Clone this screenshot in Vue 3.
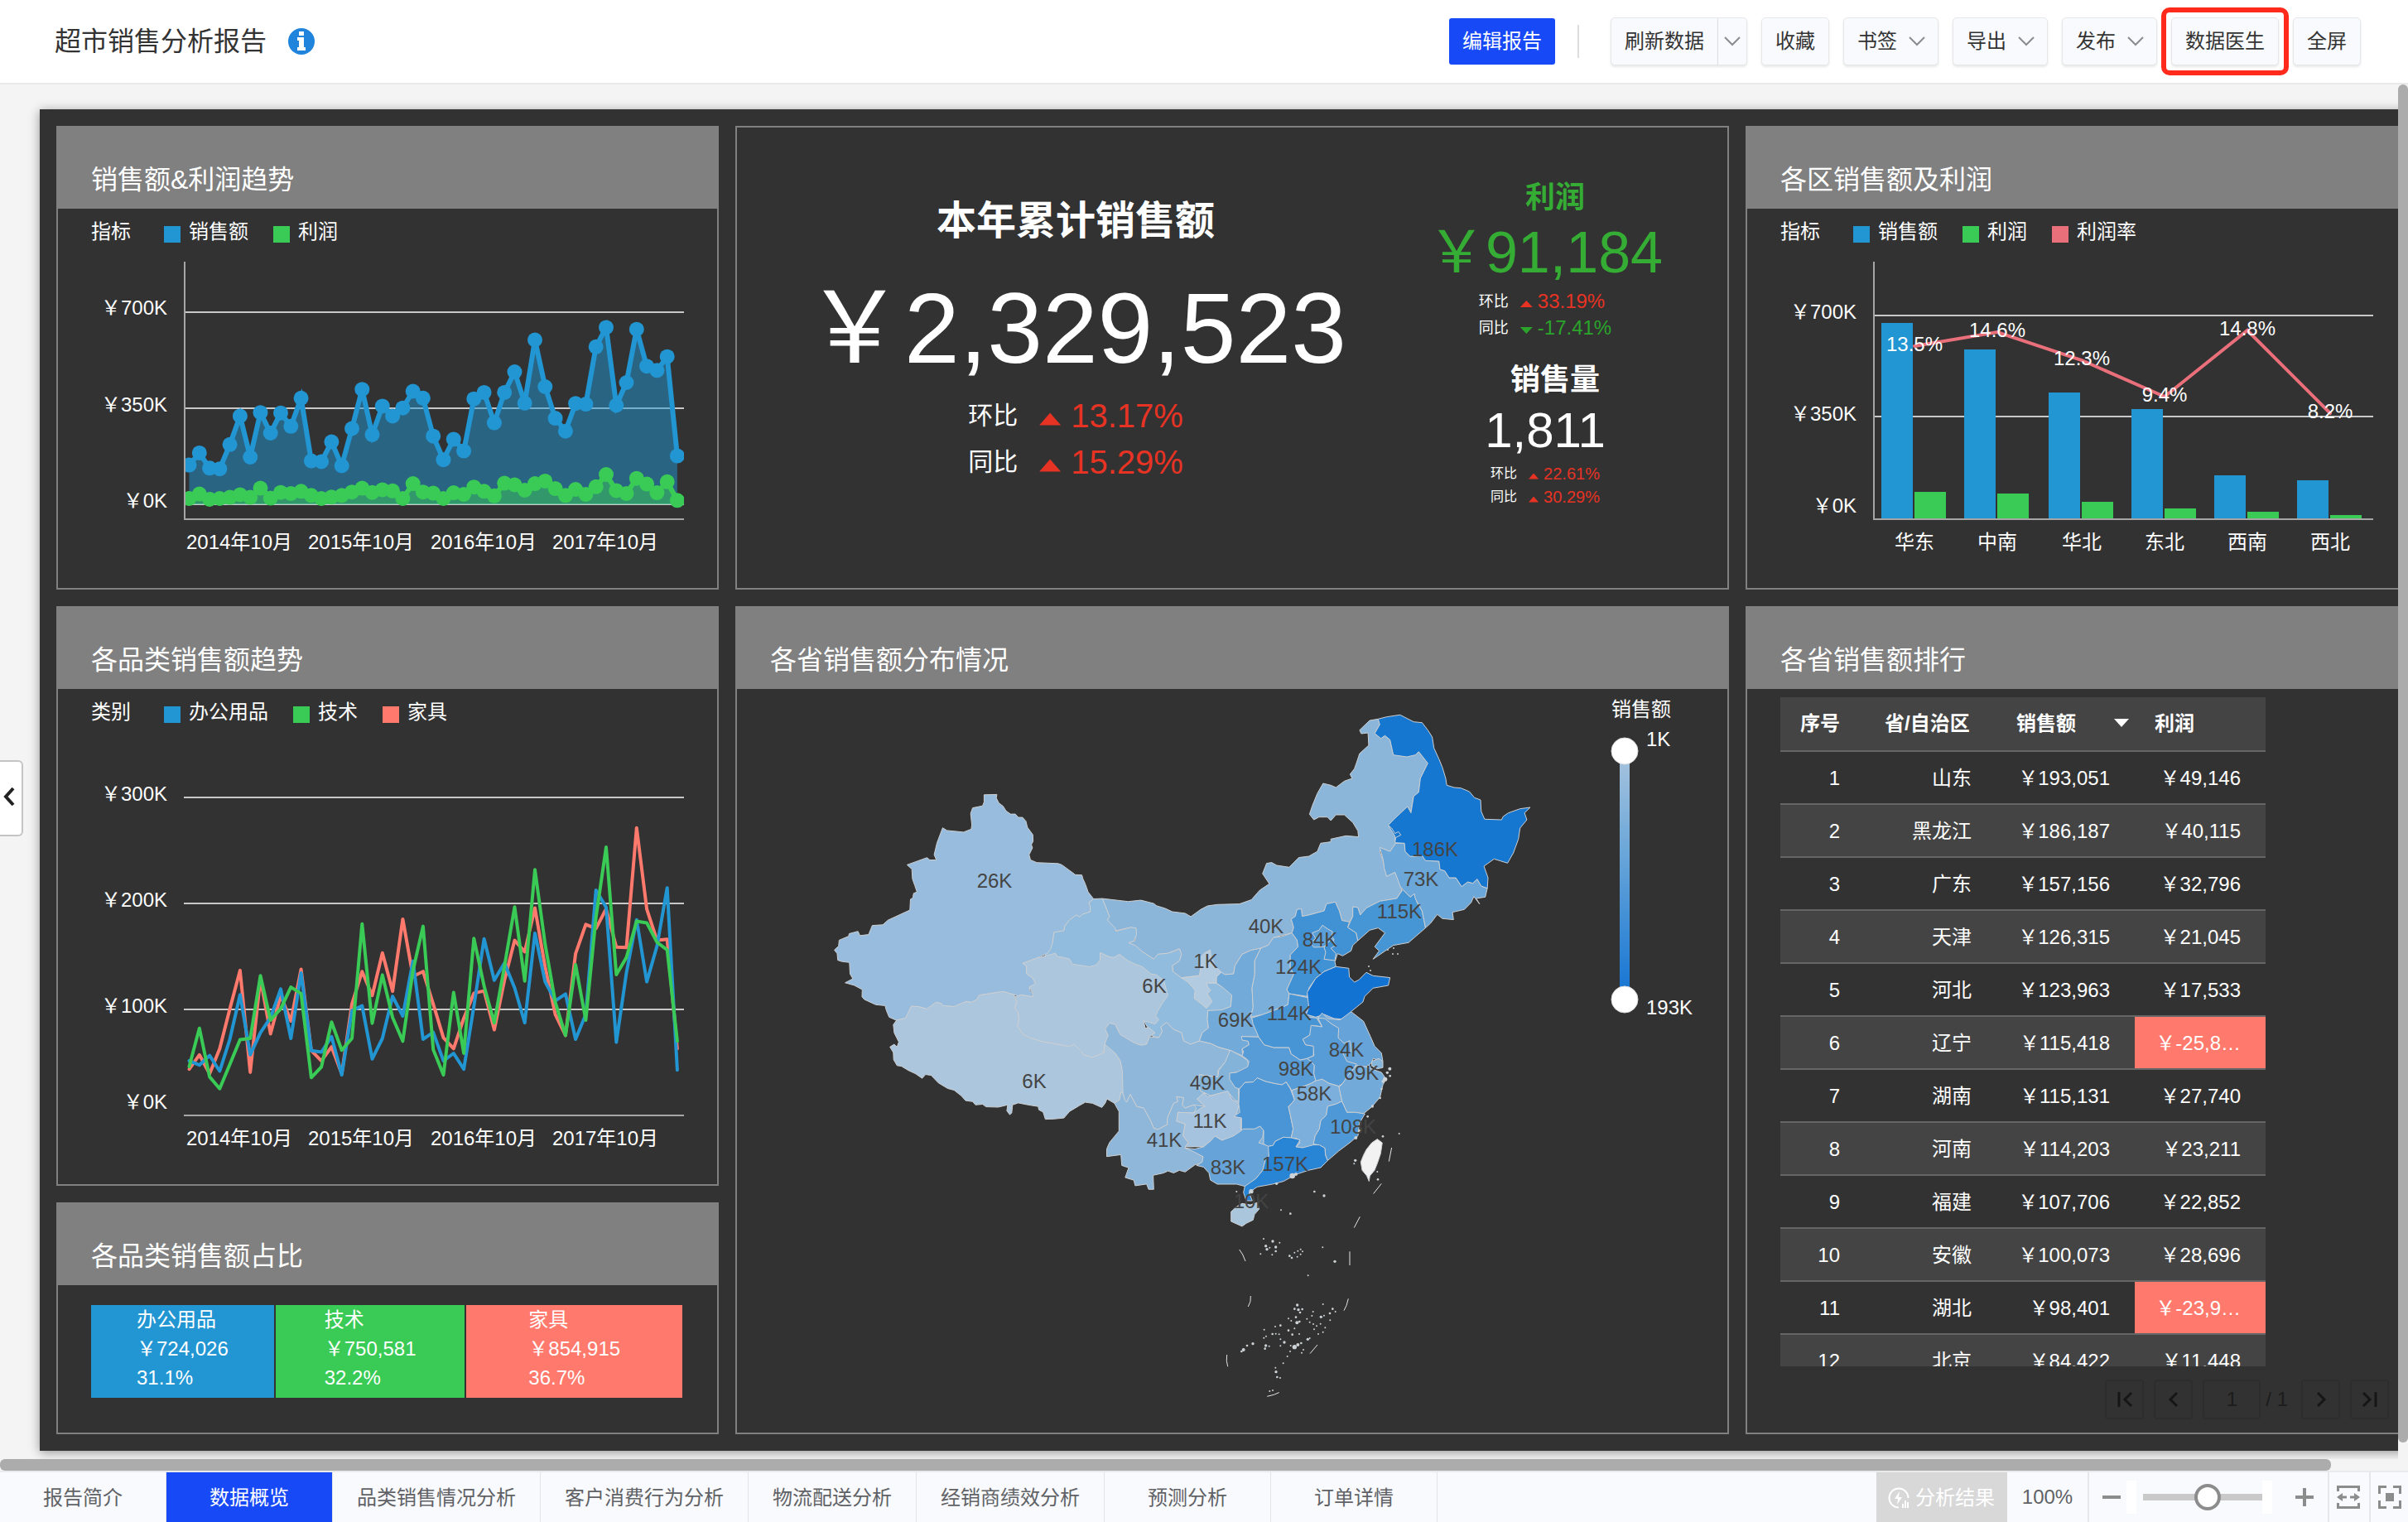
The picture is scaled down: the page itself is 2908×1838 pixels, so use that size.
<script setup>
import { ref } from 'vue'

const actions = [
  { label: '收藏' },
  { label: '书签', menu: true },
  { label: '导出', menu: true },
  { label: '发布', menu: true },
  { label: '数据医生', marked: true },
  { label: '全屏' }
]

const tabs = ['报告简介', '数据概览', '品类销售情况分析', '客户消费行为分析', '物流配送分析', '经销商绩效分析', '预测分析', '订单详情']
const activeTab = ref('数据概览')
const zoomLevel = ref(55)
const page = ref('1')

/* Monthly series, 49 points each */
const salesTrend = [1223, 1191, 1231, 1233, 1169, 1094, 1202, 1085, 1139, 1086, 1121, 1047, 1212, 1214, 1162, 1225, 1127, 1024, 1143, 1068, 1094, 1073, 1029, 1047, 1147, 1209, 1155, 1186, 1049, 1032, 1112, 1032, 978, 1060, 894, 1017, 1100, 1134, 1061, 1063, 912, 861, 1066, 1006, 866, 963, 974, 938, 1199]
const profitTrend = [1311, 1299, 1313, 1311, 1308, 1301, 1308, 1284, 1310, 1295, 1298, 1292, 1303, 1311, 1307, 1303, 1294, 1284, 1295, 1288, 1291, 1311, 1272, 1294, 1297, 1311, 1296, 1300, 1281, 1292, 1304, 1271, 1275, 1289, 1272, 1265, 1285, 1303, 1287, 1300, 1280, 1248, 1290, 1298, 1258, 1273, 1296, 1267, 1316]
const officeTrend = [1222, 1233, 1208, 1249, 1165, 1048, 1206, 1148, 1108, 1033, 1163, 991, 1195, 1199, 1158, 1259, 1090, 1077, 1217, 1163, 1052, 1104, 960, 1165, 1147, 1222, 1202, 1244, 1078, 901, 1010, 965, 1030, 1122, 886, 1014, 1064, 1046, 1165, 1100, 773, 818, 1173, 990, 851, 1014, 920, 767, 1246]
const techTrend = [1237, 1136, 1264, 1295, 1231, 1166, 1163, 998, 1115, 1085, 1028, 1045, 1266, 1238, 1120, 1194, 1163, 862, 1123, 996, 1108, 1170, 985, 868, 1192, 1259, 1042, 1202, 900, 1025, 1122, 973, 817, 1012, 719, 915, 1068, 1155, 969, 1115, 845, 660, 995, 950, 855, 859, 910, 930, 1170]
const furnitureTrend = [1244, 1206, 1256, 1190, 1085, 984, 1252, 1005, 1151, 1050, 1117, 981, 1195, 1222, 1185, 1256, 1073, 987, 1050, 938, 1039, 849, 1000, 987, 1073, 1161, 1190, 1110, 1044, 1038, 1140, 1010, 905, 935, 820, 975, 1100, 1155, 940, 863, 874, 822, 923, 924, 609, 823, 905, 902, 1190]

const toPoints = (series, top) =>
  series.map((v, i) => ({ x: Math.round((228.5 + i * 12.28) * 10) / 10, y: Math.round((top + v * 0.4592) * 10) / 10 }))
const join = (pts) => pts.map((p) => `${p.x},${p.y}`).join(' ')
const area = (pts) => `${pts[0].x},609 ${join(pts)} ${pts[pts.length - 1].x},609`

const trend = [
  { color: '#2296d3', pts: toPoints(salesTrend, 0) },
  { color: '#39cb55', pts: toPoints(profitTrend, 0) }
]
const categoryLines = [
  { color: '#ff796c', pts: toPoints(furnitureTrend, 720) },
  { color: '#2296d3', pts: toPoints(officeTrend, 720) },
  { color: '#39cb55', pts: toPoints(techTrend, 720) }
]
const months = [
  { x: 289, t: '2014年10月' },
  { x: 436, t: '2015年10月' },
  { x: 584, t: '2016年10月' },
  { x: 731, t: '2017年10月' }
]

const regions = [
  { name: '华东', x: 2272, sales: 390, profit: 594, rate: '13.5%', ry: 418 },
  { name: '中南', x: 2372, sales: 422, profit: 596, rate: '14.6%', ry: 401 },
  { name: '华北', x: 2474, sales: 474, profit: 606, rate: '12.3%', ry: 435 },
  { name: '东北', x: 2574, sales: 494, profit: 614, rate: '9.4%', ry: 479 },
  { name: '西南', x: 2674, sales: 574, profit: 618, rate: '14.8%', ry: 399 },
  { name: '西北', x: 2774, sales: 580, profit: 622, rate: '8.2%', ry: 499 }
]

const shares = [
  { name: '办公用品', value: '￥724,026', pct: 31.1, color: '#2296d3' },
  { name: '技术', value: '￥750,581', pct: 32.2, color: '#39cb55' },
  { name: '家具', value: '￥854,915', pct: 36.7, color: '#ff796c' }
]

const ranking = [
  ['山东', '￥193,051', '￥49,146'],
  ['黑龙江', '￥186,187', '￥40,115'],
  ['广东', '￥157,156', '￥32,796'],
  ['天津', '￥126,315', '￥21,045'],
  ['河北', '￥123,963', '￥17,533'],
  ['辽宁', '￥115,418', '￥-25,8…'],
  ['湖南', '￥115,131', '￥27,740'],
  ['河南', '￥114,203', '￥23,211'],
  ['福建', '￥107,706', '￥22,852'],
  ['安徽', '￥100,073', '￥28,696'],
  ['湖北', '￥98,401', '￥-23,9…'],
  ['北京', '￥84,422', '￥11,448']
]

/* Province outlines are kept per map sheet; each sheet has its own origin and unit size */
const sheets = {
  w: [980, 840, 0.3444, 0.3954],
  n: [1450, 840, 0.4082, 0.3333],
  s: [1450, 1200, 0.3333, 0.3333]
}
const outline = (...parts) =>
  parts.map((part) => {
    const [ox, oy, sx, sy] = sheets[part[0]]
    return part.slice(2).split(' ').map((p) => {
      const [x, y] = p.split(',').map(Number)
      return `${(ox + x * sx).toFixed(1)},${(oy + y * sy).toFixed(1)}`
    }).join(' ')
  }).join(' ')

/* Solid ground under the provinces, so that no gap shows along shared borders */
const ground = [
  ['#7fb0db', '1420,1240 1455,1190 1540,1150 1600,1200 1640,1250 1660,1300 1640,1330 1600,1390 1540,1410 1470,1400 1430,1340'],
  ['#1677d1', outline('n:548,470 620,460 640,560 600,575 560,540')]
]

const provinces = [
  ['#8bb6da', outline('n:470,125 475,138 495,135 497,180 470,210 462,240 455,265 442,285 448,300 425,310 400,333 385,325 362,318 345,355 330,400 322,430 335,450 350,440 375,440 385,453 400,432 425,432 450,460 465,490 467,512 430,508 385,520 385,530 355,535 345,565 320,582 290,587 262,622 225,615 210,605 195,608 183,645 203,682 175,705 150,740 115,755 50,757 20,762 0,775', 'w:1330,675 1310,665 1265,660 1240,650 1210,642 1200,635 1155,625 1110,629 1020,620 1045,675 1037,685 1067,718 1120,708 1138,712 1135,748 1112,755 1165,785 1200,805 1215,790 1250,787 1290,773 1297,790 1290,810 1265,825 1267,843 1297,862 1360,855 1400,850 1437,845 1450,852 1480,850 1485,825 1510,790 1540,778', 'n:178,915 200,905 215,877 270,860 275,840 268,810 280,800 285,775 298,773 300,800 320,795 365,780 372,755 398,748 410,780 418,815 440,820 450,800 450,765 465,768 472,795 490,770 530,745 580,735 595,705 585,670 575,640 550,655 540,600 530,565 535,552 560,565 577,535 575,510 555,470 612,402 622,420 630,365 645,350 650,300 672,245 645,203 635,215 570,215 560,160 545,145 533,155 515,137 530,105 525,85 500,90')],
  ['#92bcdd', outline('w:989,621 1020,620 1045,675 1037,685 1065,710 1067,720 1090,715 1120,708 1138,710 1140,730 1130,750 1112,755 1135,763 1165,785 1200,805 1215,790 1250,787 1275,780 1290,773 1297,790 1290,810 1265,825 1267,843 1297,862 1360,870 1400,878 1418,878 1440,890 1465,900 1474,915 1470,950 1438,960 1425,965 1390,962 1388,990 1392,1015 1370,1030 1360,1055 1330,1065 1305,1055 1298,1030 1270,1020 1245,998 1225,1012 1230,1025 1218,1045 1195,1040 1170,1000 1100,900 900,850 815,800 845,755 850,723 885,718 888,703 905,685 928,670 977,660 972,632')],
  ['#97bcdd', outline('w:605,303 650,302 648,313 657,328 672,338 682,352 698,362 715,362 725,372 740,372 752,384 757,402 776,425 777,445 771,455 775,465 763,486 768,502 790,510 865,513 878,517 925,547 948,548 952,560 960,575 970,600 989,621 972,632 978,645 977,660 950,668 940,676 928,670 905,685 888,703 885,718 850,723 845,755 838,775 828,787 790,802 740,818 754,826 754,850 775,862 786,880 764,890 766,900 778,912 775,920 735,914 727,918 712,914 672,904 625,910 588,915 580,928 560,937 543,934 510,946 500,950 460,947 455,940 436,937 405,957 375,950 350,949 330,985 298,992 272,982 262,960 258,947 225,944 185,928 177,920 178,898 150,885 118,877 145,865 135,850 133,815 105,812 92,808 90,788 80,777 95,765 97,747 130,735 132,727 163,720 170,733 200,730 213,702 250,700 268,686 345,655 347,622 355,618 358,604 370,600 362,580 354,560 352,530 335,517 405,495 415,502 438,502 430,486 440,450 460,404 475,412 510,415 533,417 560,408 562,395 558,360 565,343 600,337 605,325')],
  ['#abc6dd', outline('w:298,992 330,985 350,949 375,950 405,957 436,937 455,940 460,947 500,950 510,946 543,934 560,937 580,928 588,915 625,910 672,904 712,914 712,925 720,935 713,955 725,968 728,990 722,1008 740,1033 765,1045 810,1057 865,1065 905,1072 920,1065 945,1085 955,1098 985,1105 1005,1098 1025,1090 1028,1065 1055,1075 1065,1092 1083,1115 1090,1145 1095,1215 1085,1212 1080,1235 1062,1245 1036,1232 1030,1245 1018,1258 985,1245 960,1242 940,1252 905,1270 885,1290 850,1293 820,1294 812,1272 797,1265 795,1255 760,1250 725,1244 705,1250 702,1275 695,1280 685,1268 688,1250 655,1257 612,1256 600,1248 575,1250 565,1240 540,1237 525,1222 500,1205 478,1200 445,1183 420,1160 400,1157 388,1169 365,1155 340,1145 315,1132 300,1130 288,1112 287,1090 275,1073 290,1065 300,1073 306,1058 290,1030 287,1005')],
  ['#abc6dd', outline('w:740,818 790,802 855,787 862,797 885,800 905,805 915,820 935,823 975,828 997,823 1012,808 1012,785 1045,798 1060,800 1080,790 1110,810 1135,820 1160,828 1190,850 1210,853 1235,870 1243,895 1250,915 1230,940 1215,962 1207,978 1218,990 1205,1003 1165,993 1170,1015 1185,1015 1205,1030 1185,1042 1175,1065 1155,1068 1130,1060 1100,1052 1082,1035 1065,1005 1045,1000 1030,1018 1040,1038 1028,1065 1025,1090 1005,1098 985,1105 955,1098 945,1085 920,1065 905,1072 865,1065 810,1057 765,1045 740,1033 722,1008 728,990 725,968 713,955 720,935 712,920 735,914 775,920 778,912 764,890 786,880 775,862 754,850 754,826')],
  ['#72abd9', outline('n:178,915 160,960 160,1010 152,1060 155,1130 148,1165', 's:185,90 210,157 148,155 172,172 175,185 150,200 152,225 105,205 70,195 0,180', 'w:1430,1075 1400,1063 1360,1055 1370,1030 1392,1015 1388,990 1390,962 1438,960 1470,950 1474,915 1440,890 1420,878 1420,860 1437,845 1450,852 1480,850 1485,825 1510,790 1540,778')],
  ['#b3cbe0', outline('w:1297,862 1360,855 1365,830 1362,800 1380,785 1398,777 1402,800 1420,830 1437,845 1420,860 1418,878 1385,878 1390,890 1400,900 1388,910 1405,935 1385,955 1365,940 1342,925 1345,900 1320,875')],
  ['#8eb7da', outline('w:1028,1065 1040,1038 1030,1018 1045,1000 1065,1005 1082,1035 1130,1060 1155,1068 1175,1065 1185,1042 1218,1045 1230,1025 1225,1012 1245,998 1270,1020 1298,1030 1305,1055 1330,1065 1360,1055 1400,1063 1430,1075 1465,1083 1468,1095 1450,1120 1425,1145 1425,1165 1380,1160 1360,1158 1358,1190 1368,1210 1400,1215 1375,1215 1352,1232 1380,1255 1340,1250 1310,1260 1300,1250 1305,1228 1280,1225 1285,1240 1270,1245 1248,1290 1248,1310 1215,1325 1200,1322 1190,1300 1165,1260 1140,1255 1118,1218 1105,1242 1098,1235 1092,1215 1090,1145 1083,1115 1065,1092')],
  ['#84b3da', outline('w:1468,1083 1505,1100 1530,1115 1532,1135 1500,1150 1468,1153 1470,1175 1497,1200 1498,1240 1485,1235 1460,1210 1430,1215 1400,1222 1365,1208 1357,1190 1360,1158 1425,1165 1428,1145 1450,1120')],
  ['#8eb7da', outline('w:1098,1235 1105,1242 1118,1218 1140,1255 1165,1260 1190,1300 1200,1322 1215,1325 1248,1310 1248,1290 1270,1245 1285,1240 1280,1225 1305,1228 1300,1250 1310,1260 1340,1250 1350,1260 1340,1275 1285,1273 1280,1300 1310,1308 1303,1345 1320,1365 1310,1382 1345,1390 1373,1410 1370,1428 1345,1433 1310,1455 1290,1450 1270,1458 1250,1452 1235,1458 1198,1465 1200,1508 1182,1508 1175,1492 1135,1497 1130,1480 1100,1472 1112,1442 1088,1435 1085,1402 1035,1408 1035,1385 1045,1365 1078,1330 1078,1270 1062,1245 1080,1235 1085,1212 1092,1215')],
  ['#65a3d9', outline('w:1310,1382 1345,1385 1375,1378', 's:10,540 50,515 75,530 100,513 145,495 155,490 195,488 215,480 228,495 225,520 210,540 250,553 247,590 235,600 225,640 200,670 185,682 160,698 130,690 60,690 35,675 30,650', 'w:1375,1440 1350,1435 1370,1425 1373,1408 1340,1393')],
  ['#a5c3df', outline('w:1285,1273 1340,1275 1365,1260 1380,1255 1352,1232 1375,1215 1390,1225 1430,1215 1460,1208 1475,1235 1500,1245 1490,1280 1505,1285 1505,1330 1480,1345 1440,1358 1415,1345 1400,1360 1375,1378 1310,1378 1322,1365 1303,1345 1310,1308 1280,1300')],
  ['#579cd7', outline('s:210,157 230,185 265,195 320,195 328,218 360,240 385,235 400,245 412,260 410,290 418,315 400,325 375,335 330,350 310,320 295,330 275,327 235,318 205,305 190,320 160,322 140,345 125,340 105,310 105,288 130,285 170,265 175,245 165,235 150,225 155,210 150,200 175,185 172,172 150,168 148,155')],
  ['#4a95d6', outline('s:140,345 160,322 190,320 205,305 235,318 275,327 295,330 310,320 325,345 340,385 318,410 325,440 335,490 328,522 300,520 270,535 262,550 245,553 228,545 228,495 215,480 195,490 155,490 148,495 148,450 120,445 142,430 138,400')],
  ['#7aaedb', outline('n:178,915 200,905 215,877 240,873 270,860 275,870 285,885 288,910 265,940 265,985 275,1010 255,1065 262,1080 258,1120 240,1130 185,1155 148,1165 155,1130 152,1060 160,1010 160,960')],
  ['#4191d5', outline('n:270,860 275,840 268,810 280,800 285,775 298,773 300,800 320,795 365,780 372,755 398,748 410,780 418,815 440,820 435,840 460,860 465,888 450,905 445,925 420,943 405,935 397,965 400,982 365,1000 340,1025 320,1060 315,1090 262,1080 255,1065 275,1010 265,985 265,940 288,910 285,885')],
  ['#5b9fd8', outline('n:330,860 350,850 360,832 375,845 390,855 388,870 395,885 365,910 335,912 325,895 340,880')],
  ['#3e90d5', outline('n:365,912 388,880 400,905 385,915 400,935 397,960 365,955 370,930')],
  ['#4695d5', outline('n:598,703 620,730 632,718 640,750 655,780 665,842 615,895 570,905 510,955 528,925 515,910 545,860 525,842 500,850 465,888 460,860 435,840 450,800 450,765 465,768 472,795 490,770 530,745 580,735')],
  ['#6ba7d9', outline('n:530,550 560,565 577,535 603,535 605,565 620,583 655,580 665,598 705,600 708,630 722,635 735,660 755,660 772,692 790,675 805,680 818,665 830,690 848,698 842,730 815,735 825,755 808,728 800,750 780,775 745,785 748,812 715,808 700,793 680,825 665,842 655,780 635,735 632,718 620,730 598,703 590,690 575,640 550,655 543,625 540,595')],
  ['#1677d1', outline('n:525,85 550,77 590,70 630,95 655,98 672,125 685,150 690,190 705,230 715,260 725,300 728,325 750,333 770,335 795,348 810,370 828,378 830,420 840,448 890,450 895,438 910,425 945,410 975,405 958,425 965,450 945,480 940,520 925,570 908,607 868,592 838,618 850,660 848,698 830,690 818,665 805,680 790,675 772,692 755,660 735,660 722,635 708,630 705,600 665,598 655,580 620,583 605,565 603,535 575,533 577,515 592,505 585,493 575,500 565,480 555,470 570,450 612,402 622,425 630,365 645,350 650,300 672,245 645,203 635,215 610,222 570,215 560,160 545,145 533,155 515,137 530,105')],
  ['#4895d5', outline('n:262,1080 320,1095 325,1110 312,1150', 's:390,85 420,88 440,120 405,115 395,150 370,165 380,185 410,190 408,225 385,235 360,240 328,218 320,195 265,195 230,185 210,157 190,110 185,88', 'n:185,1155 240,1130 258,1120')],
  ['#1273d3', outline('n:400,982 438,988 440,1020 455,1038 468,1030 490,1003 510,1015 560,1022 555,1050 510,1060 485,1090 480,1110 445,1145 440,1160 415,1172 395,1170 365,1155 340,1165 312,1155 320,1130 315,1075 340,1025 365,1000')],
  ['#65a3d9', outline('s:425,88 440,70 460,90 505,95 545,65 590,100 615,155 630,190 655,215 660,245 625,235 620,250 600,265 565,265 530,260 505,220 510,180 498,160 490,125 475,110')],
  ['#579cd7', outline('s:425,88 450,90 475,110 500,125 498,160 520,180 540,170 545,210 515,215 530,245 565,255 540,290 515,325 500,335 465,325 440,310 418,318 410,290 412,260 400,245 385,235 410,225 408,190 380,185 370,165 395,150 400,115 440,120')],
  ['#72abd9', outline('s:530,300 565,260 600,265 640,280 655,285 672,310 660,330 650,375 620,410 590,435 560,430 530,430 512,390 500,340 515,325')],
  ['#86b5db', outline('s:620,245 645,235 660,245 660,268 640,272 620,262')],
  ['#7cafdb', outline('s:330,350 375,335 400,325 418,315 440,310 465,325 500,335 512,390 490,400 460,408 455,440 435,460 430,490 415,515 408,555 370,558 345,555 360,540 350,525 328,522 335,490 325,440 318,410 340,385')],
  ['#4f98d7', outline('s:460,408 490,400 512,390 530,430 560,430 595,435 575,470 570,515 540,540 500,570 460,605 452,585 450,560 430,548 408,545 415,515 430,490 435,460 455,440')],
  ['#2884d4', outline('s:245,553 262,550 270,535 300,520 328,522 360,530 345,555 370,558 408,548 430,548 450,560 452,585 460,605 435,630 390,640 345,655 300,680 260,690 205,700 175,720 187,750 165,750 155,720 160,698 200,670 225,640 235,600 247,590')],
  ['#a9c6dd', outline('s:110,790 130,772 150,760 180,765 205,757 212,780 195,800 190,820 165,832 150,843 110,825')],
  ['#f2f2f2', outline('s:640,527 658,540 652,580 640,615 630,640 613,660 610,680 602,660 585,640 580,610 590,585 600,565 620,540')]
]

const seaLines = ['692,558 682,608', '655,688 626,725', '577,808 556,848', '540,934 540,984', '535,1105 528,1130 519,1148', '423,1272 396,1304', '284,1445 265,1453 241,1459', '95,1308 94,1330 98,1351', '181,1095 180,1115 172,1134', '140,927 152,945 162,969'].map((l) => outline('s:' + l))

const islets = '412,717,4 447,732,5 291,784,3 325,797,4 228,888,3 261,897,5 236,914,5 240,926,5 250,920,2 272,918,5 286,902,2 272,933,4 259,946,3 217,943,2 322,950,4 330,957,4 340,938,3 352,932,3 362,926,3 369,934,3 350,953,3 362,944,2 442,919,3 486,970,5 389,1021,3 719,507,3 660,517,4 560,604,5 556,616,3 640,645,3 642,673,4 443,1125,3 350,1128,5 340,1142,4 354,1145,5 368,1143,4 360,1155,4 345,1172,4 318,1177,3 328,1185,3 349,1192,6 358,1188,4 385,1178,3 403,1167,3 407,1152,2 395,1190,3 408,1197,3 420,1204,3 436,1171,5 447,1166,3 434,1196,3 411,1216,3 426,1233,3 443,1226,3 451,1210,2 468,1158,4 478,1142,4 488,1152,3 469,1183,2 270,1206,3 289,1202,4 230,1217,2 260,1233,4 272,1232,3 284,1234,3 229,1247,3 237,1241,3 318,1220,4 332,1235,4 357,1233,3 340,1213,2 388,1252,5 395,1248,2 289,1252,2 303,1263,5 289,1276,2 236,1275,5 233,1286,4 248,1277,3 189,1268,5 168,1275,4 155,1290,6 148,1296,4 326,1275,3 340,1280,8 352,1272,6 364,1266,4 366,1301,3 372,1290,3 324,1296,3 314,1314,2 299,1339,2 271,1355,3 273,1370,5 277,1389,4 288,1392,2 250,1440,3 261,1437,3 130,717,3 183,716,8 332,660,10 345,654,6 275,688,5 685,272,6 676,286,5 686,298,4 668,310,8 660,318,5 655,345,4 650,378,4 622,408,5 605,445,4 575,498,6 562,522,6'
  .split(' ').map((t) => t.split(',').map(Number)).map(([x, y, r]) => ({ x: 1450 + x / 3, y: 1200 + y / 3, r: Math.max(1, r / 3) }))
const coastIslets = [[1676, 1147, 1], [1682, 1152, 1], [1688, 1152, 1], [1653, 1167, 1], [1655, 1172, 1], [1683, 1145, 1]]

const mapLabels = [
  [1201, 1064, '26K'], [1394, 1191, '6K'], [1249, 1306, '6K'], [1456, 1161, '1K'], [1492, 1232, '69K'],
  [1458, 1308, '49K'], [1461, 1354, '11K'], [1406, 1377, '41K'], [1483, 1410, '83K'], [1733, 1026, '186K'],
  [1716, 1062, '73K'], [1690, 1101, '115K'], [1529, 1119, '40K'], [1594, 1135, '84K'], [1568, 1168, '124K'],
  [1557, 1224, '114K'], [1626, 1268, '84K'], [1565, 1291, '98K'], [1644, 1296, '69K'], [1587, 1321, '58K'],
  [1634, 1361, '108K'], [1552, 1406, '157K'], [1511, 1451, '10K']
]
</script>

<template>
  <div class="page">
    <header class="topbar">
      <h1>超市销售分析报告</h1>
      <svg class="info" viewBox="0 0 32 32" aria-hidden="true">
        <circle cx="16" cy="16" r="16" fill="#2084dc" />
        <path d="M13 4h6v5h-6zM11 11h8v12h2v4H11v-4h2v-8h-2z" fill="#fff" />
      </svg>
      <div class="spacer"></div>
      <button class="primary" type="button">编辑报告</button>
      <span class="rule"></span>
      <div class="split">
        <button class="btn split-main" type="button">刷新数据</button>
        <button class="btn split-more" type="button" aria-label="更多刷新选项">
          <svg class="chev" viewBox="0 0 20 12"><path d="M1 1l9 9 9-9" /></svg>
        </button>
      </div>
      <button v-for="a in actions" :key="a.label" class="btn" :class="{ menu: a.menu, marked: a.marked }" type="button">
        {{ a.label }}
        <svg v-if="a.menu" class="chev" viewBox="0 0 20 12"><path d="M1 1l9 9 9-9" /></svg>
      </button>
    </header>

    <div class="stage">
      <button class="drawer" type="button" aria-label="展开">
        <svg viewBox="0 0 14 24"><path d="M12 2L3 12l9 10" /></svg>
      </button>
      <div class="viewport">
        <main class="board">
          <section class="panel">
            <h2>销售额&amp;利润趋势</h2>
            <div class="legend">
              <span class="legend-name">指标</span>
              <span class="key blue">销售额</span>
              <span class="key green">利润</span>
            </div>
            <svg class="chart" viewBox="70 308 796 402">
              <defs><clipPath id="plot"><rect x="224" y="316" width="602" height="320" /></clipPath></defs>
              <path class="grid" d="M224 377H826M224 493H826M224 609H826" />
              <g clip-path="url(#plot)">
                <polygon v-for="s in trend" :key="s.color" :points="area(s.pts)" :fill="s.color" fill-opacity="0.5" />
                <g v-for="s in trend" :key="'l' + s.color">
                  <polyline :points="join(s.pts)" fill="none" :stroke="s.color" stroke-width="6" />
                  <circle v-for="p in s.pts" :key="p.x" :cx="p.x" :cy="p.y" r="9" :fill="s.color" />
                </g>
              </g>
              <path class="axis" d="M223 316V627H826" />
              <g text-anchor="end">
                <text x="202" y="380">￥700K</text>
                <text x="202" y="497">￥350K</text>
                <text x="202" y="613">￥0K</text>
              </g>
              <text v-for="m in months" :key="m.t" :x="m.x" y="663" text-anchor="middle">{{ m.t }}</text>
            </svg>
          </section>

          <section class="panel kpis">
            <div class="kpi main">
              <h3>本年累计销售额</h3>
              <p class="value">￥2,329,523</p>
              <dl>
                <dt>环比</dt><dd class="up">13.17%</dd>
                <dt>同比</dt><dd class="up">15.29%</dd>
              </dl>
            </div>
            <div class="kpi-side">
              <div class="kpi profit">
                <h3>利润</h3>
                <p class="value">￥91,184</p>
                <dl>
                  <dt>环比</dt><dd class="up">33.19%</dd>
                  <dt>同比</dt><dd class="down">-17.41%</dd>
                </dl>
              </div>
              <div class="kpi volume">
                <h3>销售量</h3>
                <p class="value">1,811</p>
                <dl>
                  <dt>环比</dt><dd class="up">22.61%</dd>
                  <dt>同比</dt><dd class="up">30.29%</dd>
                </dl>
              </div>
            </div>
          </section>

          <section class="panel">
            <h2>各区销售额及利润</h2>
            <div class="legend">
              <span class="legend-name">指标</span>
              <span class="key blue">销售额</span>
              <span class="key green">利润</span>
              <span class="key rose">利润率</span>
            </div>
            <svg class="chart" viewBox="2110 308 796 402">
              <path class="grid" d="M2264 381H2866M2264 503H2866" />
              <g v-for="r in regions" :key="r.name">
                <rect :x="r.x" :y="r.sales" width="38" :height="626 - r.sales" fill="#2296d3" />
                <rect :x="r.x + 40" :y="r.profit" width="38" :height="626 - r.profit" fill="#39cb55" />
              </g>
              <path class="axis" d="M2263 316V627H2866" />
              <polyline :points="regions.map((r) => `${r.x + 40},${r.ry}`).join(' ')" fill="none" stroke="#e96f7a" stroke-width="4" stroke-linecap="round" />
              <g text-anchor="end">
                <text x="2242" y="385">￥700K</text>
                <text x="2242" y="508">￥350K</text>
                <text x="2242" y="619">￥0K</text>
              </g>
              <g text-anchor="middle">
                <text v-for="r in regions" :key="r.rate" :x="r.x + 40" :y="r.ry + 6">{{ r.rate }}</text>
                <text v-for="r in regions" :key="r.name" :x="r.x + 40" y="663">{{ r.name }}</text>
              </g>
            </svg>
          </section>

          <section class="panel">
            <h2>各品类销售额趋势</h2>
            <div class="legend">
              <span class="legend-name">类别</span>
              <span class="key blue">办公用品</span>
              <span class="key green">技术</span>
              <span class="key coral">家具</span>
            </div>
            <svg class="chart" viewBox="70 888 796 542">
              <path class="grid" d="M222 963H826M222 1091H826M222 1219H826" />
              <path class="axis" d="M222 1347H826" />
              <polyline v-for="s in categoryLines" :key="s.color" :points="join(s.pts)" fill="none" :stroke="s.color" stroke-width="4" stroke-linejoin="round" stroke-linecap="round" />
              <g text-anchor="end">
                <text x="202" y="967">￥300K</text>
                <text x="202" y="1095">￥200K</text>
                <text x="202" y="1223">￥100K</text>
                <text x="202" y="1339">￥0K</text>
              </g>
              <text v-for="m in months" :key="m.t" :x="m.x" y="1383" text-anchor="middle">{{ m.t }}</text>
            </svg>
          </section>

          <section class="panel tall">
            <h2>各省销售额分布情况</h2>
            <svg class="chart" viewBox="890 832 1196 898">
              <defs>
                <linearGradient id="scale" x1="0" y1="0" x2="0" y2="1">
                  <stop offset="0" stop-color="#a9c5de" />
                  <stop offset="0.4" stop-color="#6ba7d9" />
                  <stop offset="1" stop-color="#1273d3" />
                </linearGradient>
              </defs>
              <polygon v-for="g in ground" :key="g[0]" :points="g[1]" :fill="g[0]" />
              <g stroke="#cdd0d3" stroke-width="1" stroke-linejoin="round">
                <polygon v-for="(p, i) in provinces" :key="i" :points="p[1]" :fill="p[0]" />
              </g>
              <polyline v-for="l in seaLines" :key="l" :points="l" fill="none" stroke="#e4e4e4" stroke-width="1" />
              <g fill="#cdd2d6">
                <circle v-for="(c, i) in islets" :key="i" :cx="c.x" :cy="c.y" :r="c.r" />
                <circle v-for="(c, i) in coastIslets" :key="'c' + i" :cx="c[0]" :cy="c[1]" :r="c[2]" />
              </g>
              <g class="map-labels" text-anchor="middle">
                <text v-for="(l, i) in mapLabels" :key="i" :x="l[0]" :y="l[1] + 8">{{ l[2] }}</text>
              </g>
              <text x="1946" y="865">销售额</text>
              <rect x="1956" y="907" width="12" height="300" fill="url(#scale)" />
              <circle cx="1962" cy="907" r="16" fill="#fff" stroke="#ddd" />
              <circle cx="1962" cy="1207" r="16" fill="#fff" stroke="#ddd" />
              <text x="1988" y="901">1K</text>
              <text x="1988" y="1225">193K</text>
            </svg>
          </section>

          <section class="panel tall">
            <h2>各省销售额排行</h2>
            <div class="table-view">
              <table>
                <colgroup><col class="c-no" /><col class="c-area" /><col class="c-sales" /><col class="c-profit" /></colgroup>
                <thead>
                  <tr>
                    <th>序号</th>
                    <th>省/自治区</th>
                    <th class="sorted">销售额</th>
                    <th>利润</th>
                  </tr>
                </thead>
                <tbody>
                  <tr v-for="(r, i) in ranking" :key="r[0]">
                    <td>{{ i + 1 }}</td>
                    <td>{{ r[0] }}</td>
                    <td>{{ r[1] }}</td>
                    <td :class="{ loss: r[2].includes('-') }">{{ r[2] }}</td>
                  </tr>
                </tbody>
              </table>
            </div>
            <div class="pager">
              <button type="button" aria-label="首页"><svg viewBox="0 0 20 20"><path d="M3 1v18M18 2l-8 8 8 8" /></svg></button>
              <button type="button" aria-label="上一页"><svg viewBox="0 0 20 20"><path d="M14 2l-8 8 8 8" /></svg></button>
              <input v-model="page" type="text" aria-label="页码" />
              <span>/ 1</span>
              <button type="button" aria-label="下一页"><svg viewBox="0 0 20 20"><path d="M6 2l8 8-8 8" /></svg></button>
              <button type="button" aria-label="末页"><svg viewBox="0 0 20 20"><path d="M17 1v18M2 2l8 8-8 8" /></svg></button>
            </div>
          </section>

          <section class="panel">
            <h2>各品类销售额占比</h2>
            <div class="shares">
              <div v-for="s in shares" :key="s.name" class="share" :style="{ flexGrow: s.pct, background: s.color }">
                <p>{{ s.name }}<br />{{ s.value }}<br />{{ s.pct }}%</p>
              </div>
            </div>
          </section>
        </main>
      </div>
      <div class="vscroll"><i></i></div>
    </div>
    <div class="hscroll"><i></i></div>

    <footer class="bottombar">
      <nav>
        <button v-for="t in tabs" :key="t" type="button" class="tab" :class="{ active: t === activeTab }" @click="activeTab = t">{{ t }}</button>
      </nav>
      <button class="result" type="button">
        <svg viewBox="0 0 26 26">
          <path d="M13 24.500A11.500 11.500 0 1 1 24.500 13" fill="none" stroke="#fff" stroke-width="2" />
          <path d="M14 5l-6 9h4l-1 7 6-9h-4z" fill="#fff" />
          <path d="M18 25v-5M21 25v-9M24 25v-7" stroke="#fff" stroke-width="2" />
        </svg>
        分析结果
      </button>
      <span class="percent">100%</span>
      <div class="zoomer">
        <button type="button" aria-label="缩小"><svg viewBox="0 0 22 22"><path d="M0 11h22" /></svg></button>
        <i></i>
        <input v-model="zoomLevel" type="range" min="0" max="100" aria-label="缩放" />
        <i class="end"></i>
        <button type="button" aria-label="放大"><svg viewBox="0 0 22 22"><path d="M0 11h22M11 0v22" /></svg></button>
      </div>
      <button class="fit" type="button" aria-label="适应宽度">
        <svg viewBox="0 0 28 28"><path d="M1.500 7V1.500h25V7M1.500 21v5.500h25V21M5 14h7M16 14h7" /><path class="solid" d="M0 14l7-5v10zM28 14l-7-5v10z" /></svg>
      </button>
      <button class="fit" type="button" aria-label="适应页面">
        <svg viewBox="0 0 28 28"><path d="M1.500 10V1.500H10M18 1.500h8.500V10M26.500 18v8.500H18M10 26.500H1.500V18" /><path class="solid" d="M9 9h10v10H9z" /></svg>
      </button>
    </footer>
  </div>
</template>

<style>
body {
  margin: 0;
  background: #f4f4f4;
}
</style>

<style scoped>
* {
  box-sizing: border-box;
}
.page {
  font: 24px/32px "Liberation Sans", "Noto Sans CJK SC", sans-serif;
  color: #333;
  overflow: hidden;
}
button,
input {
  font: inherit;
  color: inherit;
  margin: 0;
  padding: 0;
  border: 0;
  background: none;
}
h1,
h2,
h3,
p,
dl,
dd {
  margin: 0;
  font-weight: 400;
}

.topbar {
  display: flex;
  align-items: center;
  gap: 17px;
  height: 102px;
  padding: 0 57px 0 66px;
  background: #fff;
  border-bottom: 2px solid #e8e8e8;
}
h1 {
  font-size: 32px;
  line-height: 48px;
}
.info {
  width: 32px;
  height: 32px;
  margin-left: 9px;
}
.spacer {
  flex: 1;
}
.primary {
  height: 56px;
  padding: 0 16px;
  border-radius: 3px;
  background: #1849f6;
  color: #fff;
}
.rule {
  width: 2px;
  height: 40px;
  margin: 0 21px 0 10px;
  background: #ddd;
}
.btn {
  position: relative;
  display: flex;
  align-items: center;
  height: 58px;
  padding: 0 16px;
  border: 1px solid #e6e7e9;
  border-radius: 5px;
  background: #f8fafd;
  box-shadow: 0 2px 3px #00000018;
}
.btn.menu {
  gap: 14px;
  padding-right: 15px;
}
.chev {
  width: 20px;
  height: 12px;
  fill: none;
  stroke: #8a8c90;
  stroke-width: 2;
}
.split {
  display: flex;
}
.split-main {
  border-radius: 5px 0 0 5px;
}
.split-more {
  padding: 0 7px;
  border-left: 0;
  border-radius: 0 5px 5px 0;
}
.marked::after {
  content: "";
  position: absolute;
  inset: -13px;
  border: 6px solid #ff2a1c;
  border-radius: 10px;
}

.stage {
  position: relative;
  display: flex;
}
.viewport {
  flex: 1;
  min-width: 0;
  overflow: hidden;
}
.drawer {
  position: absolute;
  left: 0;
  top: 816px;
  width: 28px;
  height: 92px;
  display: flex;
  align-items: center;
  padding: 0 0 4px 4px;
  background: #fff;
  border: 2px solid #c4c4c4;
  border-left: 0;
  border-radius: 0 6px 6px 0;
}
.drawer svg {
  width: 14px;
  height: 24px;
  fill: none;
  stroke: #222;
  stroke-width: 4;
}
.board {
  display: grid;
  grid-template-columns: 2fr 3fr 2fr;
  gap: 20px;
  margin: 30px -32px 10px 48px;
  padding: 20px;
  background: #323232;
  box-shadow: 0 2px 12px #00000066;
}
.panel {
  min-width: 0;
  border: 2px solid #808080;
  color: #fff;
}
.panel.tall {
  grid-row: span 2;
}
h2 {
  height: 98px;
  padding: 39px 40px 0;
  background: #808080;
  font-size: 32px;
  line-height: 48px;
}
.legend {
  display: flex;
  align-items: center;
  height: 56px;
  padding-left: 40px;
  gap: 29px;
}
.legend-name {
  margin-right: 11px;
}
.key {
  display: flex;
  align-items: center;
  gap: 10px;
}
.key + .key {
  margin-left: 1px;
}
.key::before {
  content: "";
  width: 20px;
  height: 20px;
  margin-top: 6px;
  background: currentColor;
}
.key.blue::before {
  background: #2296d3;
}
.key.green::before {
  background: #39cb55;
}
.key.rose::before {
  background: #e96f7a;
}
.key.coral::before {
  background: #ff796c;
}
.chart {
  display: block;
  width: 100%;
}
.chart text {
  font-size: 24px;
  fill: #fff;
}
.chart .map-labels text {
  fill: #444;
}
.grid {
  stroke: #c8c8c8;
  stroke-width: 2;
}
.axis {
  fill: none;
  stroke: #a6a6a6;
  stroke-width: 2;
}

.kpis {
  display: flex;
  padding-right: 58px;
}
.kpi {
  display: flex;
  flex-direction: column;
  align-items: center;
}
.kpi.main {
  flex: 5;
  padding: 85px 0 0 4px;
}
.kpi-side {
  flex: 2;
  padding-top: 63px;
}
h3 {
  font-size: 36px;
  line-height: 44px;
  font-weight: 700;
  padding-left: 24px;
}
.value {
  white-space: nowrap;
}
.main h3 {
  padding: 0;
  font-size: 48px;
  line-height: 56px;
}
.main .value {
  margin: 41px 0 18px;
  font-size: 120px;
  line-height: 120px;
}
.kpi dl {
  display: grid;
  grid-template-columns: auto auto;
  column-gap: 14px;
  align-items: center;
}
.kpi dd {
  display: flex;
  align-items: center;
  gap: 6px;
  color: #e63323;
}
.kpi dd.down {
  color: #2ba42b;
}
.kpi dd::before {
  content: "";
  width: 15px;
  height: 8px;
  margin-top: 6px;
  background: currentColor;
  clip-path: polygon(50% 0, 100% 100%, 0 100%);
}
.kpi dd.down::before {
  clip-path: polygon(0 0, 100% 0, 50% 100%);
}
.main dl {
  column-gap: 26px;
  font-size: 40px;
  line-height: 56px;
}
.main dt {
  font-size: 30px;
}
.main dd {
  gap: 12px;
}
.main dd::before {
  width: 26px;
  height: 15px;
  margin-top: 8px;
}
.profit h3,
.profit .value {
  color: #35ad35;
}
.profit .value {
  margin: 9px 0 8px;
  font-size: 70px;
  line-height: 70px;
}
.profit dt {
  font-size: 18px;
}
.volume {
  margin-top: 25px;
}
.volume .value {
  margin: 9px 0 8px;
  font-size: 60px;
  line-height: 60px;
}
.volume dl {
  font-size: 20px;
  line-height: 28px;
}
.volume dt {
  font-size: 16px;
}
.volume dd::before {
  width: 12px;
  height: 7px;
}

.shares {
  display: flex;
  gap: 2px;
  padding: 24px 42px 42px 40px;
}
.share {
  flex: 1 1 0;
  display: flex;
  justify-content: center;
  height: 112px;
}
.share p {
  line-height: 35px;
}

.table-view {
  height: 808px;
  margin: 10px 0 0 40px;
  overflow: hidden;
}
table {
  width: 586px;
  table-layout: fixed;
  border-collapse: separate;
  border-spacing: 0;
}
.c-no {
  width: 102px;
}
.c-area {
  width: 159px;
}
.c-sales {
  width: 167px;
}
.c-profit {
  width: 158px;
}
th,
td {
  height: 64px;
  padding: 2px 30px 0 0;
  border-bottom: 2px solid #666;
  text-align: right;
  white-space: nowrap;
}
th {
  position: relative;
  height: 66px;
  padding: 0 0 0 24px;
  text-align: left;
  font-weight: 700;
  background: #444;
}
th.sorted::after {
  content: "";
  position: absolute;
  right: 7px;
  top: 26px;
  border: 9px solid transparent;
  border-top: 10px solid #fff;
  border-bottom: 0;
}
tbody tr:nth-child(even) td {
  background: #444;
}
tbody td.loss,
tbody tr:nth-child(even) td.loss {
  background: #ff796c;
}
.pager {
  display: flex;
  align-items: center;
  justify-content: flex-end;
  gap: 12px;
  padding: 16px 21px 16px 0;
  color: #1c1c1c;
}
.pager button,
.pager input {
  display: grid;
  place-items: center;
  width: 47px;
  height: 48px;
  border: 2px solid #2d2d2d;
  border-radius: 4px;
}
.pager input {
  width: 70px;
  text-align: center;
}
.pager span {
  margin: 0 4px 0 -6px;
}
.pager svg {
  width: 20px;
  height: 20px;
  fill: none;
  stroke: #161616;
  stroke-width: 3;
}

.vscroll {
  width: 12px;
}
.vscroll i {
  display: block;
  height: 98.8%;
  border-radius: 6px;
  background: #acacac;
}
.hscroll {
  height: 14px;
}
.hscroll i {
  display: block;
  width: 96.8%;
  height: 100%;
  border-radius: 6px;
  background: #acacac;
}

.bottombar {
  position: relative;
  display: flex;
  height: 62px;
  border-top: 2px solid #e9eaec;
  background: #f9fafd;
  color: #606266;
}
nav {
  flex: 1;
  display: flex;
}
.tab {
  min-width: 201px;
  padding: 2px 29px 0;
  border-right: 1px solid #e3e4e7;
  white-space: nowrap;
}
.tab.active {
  background: #1849f6;
  color: #fff;
}
.result {
  display: flex;
  align-items: center;
  gap: 7px;
  width: 158px;
  padding: 2px 0 0 14px;
  background: #d8d8d8;
  color: #fff;
}
.result svg {
  width: 26px;
  height: 26px;
}
.percent {
  width: 97px;
  line-height: 60px;
  text-align: center;
}
.zoomer {
  display: flex;
  align-items: center;
  width: 290px;
  padding-left: 16px;
  border-left: 2px solid #e6e7ea;
}
.zoomer button,
.zoomer svg {
  width: 22px;
  height: 22px;
  display: block;
}
.zoomer svg {
  stroke: #8c8c8c;
  stroke-width: 4;
}
.zoomer i {
  width: 12px;
  height: 40px;
  margin: 0 8px 0 7px;
  background: #fff;
}
.zoomer i.end {
  margin: 0 28px 0 0;
}
.zoomer input {
  appearance: none;
  width: 144px;
  height: 32px;
}
.zoomer input::-webkit-slider-runnable-track {
  height: 8px;
  background: #c9c9c9;
}
.zoomer input::-webkit-slider-thumb {
  appearance: none;
  width: 32px;
  height: 32px;
  margin-top: -12px;
  border: 4px solid #8c8c8c;
  border-radius: 50%;
  background: #fff;
}
.fit {
  width: 50px;
  padding-left: 9px;
  border-left: 2px solid #e6e7ea;
}
.fit:last-child {
  width: 47px;
}
.fit svg {
  display: block;
  width: 28px;
  height: 28px;
  fill: none;
  stroke: #8c8c8c;
  stroke-width: 3;
}
.fit .solid {
  fill: #8c8c8c;
  stroke: none;
}
</style>
